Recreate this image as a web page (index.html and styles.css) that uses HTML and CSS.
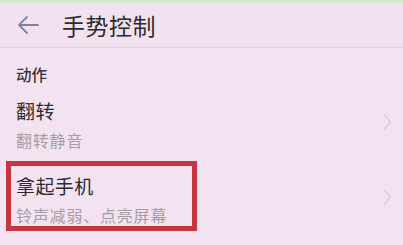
FILE: index.html
```html
<!DOCTYPE html>
<html lang="zh">
<head>
<meta charset="utf-8">
<link rel="stylesheet" href="styles.css">
</head>
<body>
<div class="screen">
  <div class="status"></div>
  <div class="header">
    <svg class="back" width="22" height="20" viewBox="0 0 22 20"><path d="M21 10 H2 M10 2 L2 10 L10 18" fill="none" stroke="#7d83a2" stroke-width="1.8" stroke-linecap="round" stroke-linejoin="round"/></svg>
    <div class="title">手势控制</div>
  </div>
  <div class="divider"></div>
  <div class="section">动作</div>
  <div class="item first">
    <div class="texts">
      <div class="item-title">翻转</div>
      <div class="item-sub">翻转静音</div>
    </div>
    <svg class="chev" width="9" height="18" viewBox="0 0 9 18"><path d="M1.5 2 L7.5 9 L1.5 16" fill="none" stroke="#d9cdd8" stroke-width="1.6" stroke-linecap="round" stroke-linejoin="round"/></svg>
  </div>
  <div class="item second">
    <div class="texts">
      <div class="item-title">拿起手机</div>
      <div class="item-sub">铃声减弱、点亮屏幕</div>
    </div>
    <svg class="chev" width="9" height="18" viewBox="0 0 9 18"><path d="M1.5 2 L7.5 9 L1.5 16" fill="none" stroke="#d9cdd8" stroke-width="1.6" stroke-linecap="round" stroke-linejoin="round"/></svg>
  </div>
  <div class="highlight"></div>
</div>
</body>
</html>
```
FILE: styles.css
```css
html, body {
  margin: 0;
  padding: 0;
}
body {
  background: #f3e3f1;
  font-family: "Noto Sans CJK SC", "Noto Sans", sans-serif;
}
.screen {
  position: relative;
  width: 403px;
  height: 245px;
  overflow: hidden;
  background: #f3e3f1;
}
.status {
  height: 3px;
  background: #d2e9cf;
}
.header {
  height: 44px;
  display: flex;
  align-items: center;
  padding-left: 17px;
  gap: 23px;
  background: #f2e2f0;
}
.back {
  display: block;
}
.title {
  font-size: 23px;
  line-height: 30px;
  letter-spacing: 0.5px;
  color: #2b2a2d;
}
.divider {
  height: 1px;
  background: #e3d1df;
}
.section {
  margin-top: 15px;
  padding-left: 16px;
  font-size: 15.5px;
  line-height: 22px;
  font-weight: 500;
  color: #38363a;
}
.item {
  display: flex;
  align-items: center;
  justify-content: space-between;
  padding: 13px 11px 0 16px;
}
.item.second {
  padding-top: 22px;
}
.texts {
  display: flex;
  flex-direction: column;
  gap: 5px;
}
.item-title {
  font-size: 19px;
  line-height: 26px;
  letter-spacing: 0.4px;
  color: #2d2b2f;
}
.item-sub {
  font-size: 16px;
  line-height: 22px;
  letter-spacing: 0.8px;
  color: #a59ea7;
}
.chev {
  display: block;
  margin-top: -6px;
}
.highlight {
  position: absolute;
  left: 6px;
  top: 161px;
  width: 191px;
  height: 70px;
  box-sizing: border-box;
  border: 5px solid #c8343f;
}
```
